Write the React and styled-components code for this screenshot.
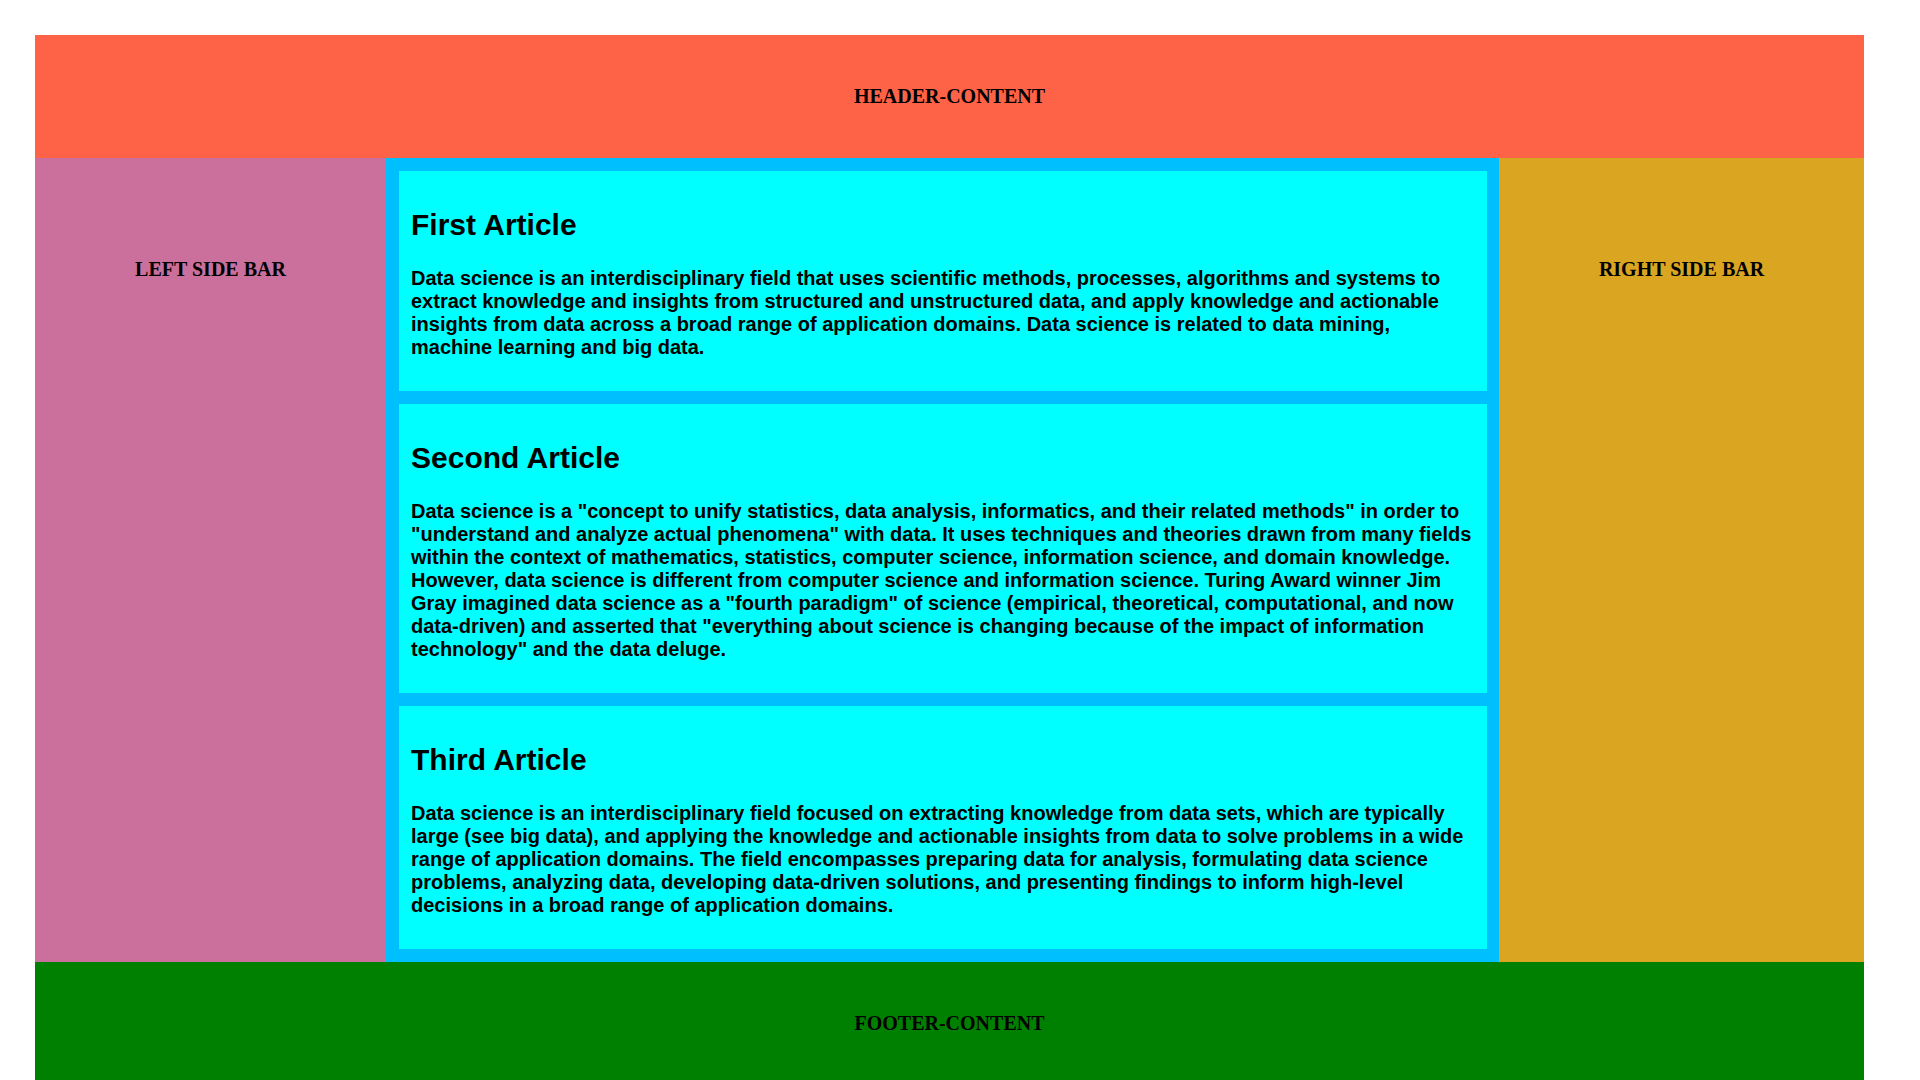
import React from "react";
import styled, { createGlobalStyle } from "styled-components";

const GlobalStyle = createGlobalStyle`
  html, body {
    margin: 0;
    padding: 0;
    background: #ffffff;
  }
  body {
    font-family: "Liberation Serif", "Times New Roman", serif;
    color: #000;
  }

  /* scrollbar like the one in the shot */
  ::-webkit-scrollbar {
    width: 21px;
    background: #f1f1f1;
  }
  ::-webkit-scrollbar-track {
    background: #f1f1f1;
  }
  ::-webkit-scrollbar-thumb {
    background: #c1c1c1;
    border: 2px solid #f1f1f1;
    background-clip: padding-box;
  }
  ::-webkit-scrollbar-button:single-button {
    display: block;
    height: 21px;
    background-color: #f1f1f1;
    background-repeat: no-repeat;
    background-size: 5px 5px, 5px 5px;
  }
  ::-webkit-scrollbar-button:single-button:vertical:decrement {
    background-image:
      linear-gradient(to top left, #a3a3a3 50%, transparent 50%),
      linear-gradient(to top right, #a3a3a3 50%, transparent 50%);
    background-position: 5.5px 8px, 10.5px 8px;
  }
  ::-webkit-scrollbar-button:single-button:vertical:increment {
    background-image:
      linear-gradient(to bottom left, #505050 50%, transparent 50%),
      linear-gradient(to bottom right, #505050 50%, transparent 50%);
    background-position: 5.5px 8px, 10.5px 8px;
  }
`;

const Page = styled.div`
  width: 1829px;
  margin: 35px;
`;

const Band = styled.header`
  height: 123px;
  background: ${(p) => p.bg};
  display: flex;
  align-items: center;
  justify-content: center;
`;

const BandTitle = styled.h3`
  margin: 0;
  font-family: "Liberation Serif", "Times New Roman", serif;
  font-size: 20px;
  font-weight: bold;
  line-height: 23px;
`;

const Middle = styled.div`
  display: grid;
  grid-template-columns: 351px 1fr 365px;
`;

const SideBar = styled.aside`
  background: ${(p) => p.bg};
  padding-top: 100px;
  text-align: center;
`;

const Main = styled.main`
  background: #00bfff;
  padding: 12.5px;
  display: flex;
  flex-direction: column;
  gap: 12.5px;
`;

const Article = styled.article`
  background: #00ffff;
  padding: 12.5px;
  font-family: "Liberation Sans", Arial, sans-serif;
  font-weight: bold;

  h2 {
    font-size: 30px;
    margin: 24.5px 0;
    line-height: 34.5px;
  }

  p {
    font-size: 20px;
    line-height: 23px;
    margin: 20px 0;
  }
`;

const articles = [
  {
    title: "First Article",
    text: "Data science is an interdisciplinary field that uses scientific methods, processes, algorithms and systems to extract knowledge and insights from structured and unstructured data, and apply knowledge and actionable insights from data across a broad range of application domains. Data science is related to data mining, machine learning and big data.",
  },
  {
    title: "Second Article",
    text: 'Data science is a "concept to unify statistics, data analysis, informatics, and their related methods" in order to "understand and analyze actual phenomena" with data. It uses techniques and theories drawn from many fields within the context of mathematics, statistics, computer science, information science, and domain knowledge. However, data science is different from computer science and information science. Turing Award winner Jim Gray imagined data science as a "fourth paradigm" of science (empirical, theoretical, computational, and now data-driven) and asserted that "everything about science is changing because of the impact of information technology" and the data deluge.',
  },
  {
    title: "Third Article",
    text: "Data science is an interdisciplinary field focused on extracting knowledge from data sets, which are typically large (see big data), and applying the knowledge and actionable insights from data to solve problems in a wide range of application domains. The field encompasses preparing data for analysis, formulating data science problems, analyzing data, developing data-driven solutions, and presenting findings to inform high-level decisions in a broad range of application domains.",
  },
];

const App = () => {
  return (
    <>
      <GlobalStyle />
      <Page>
        <Band bg="#ff6347">
          <BandTitle>HEADER-CONTENT</BandTitle>
        </Band>
        <Middle>
          <SideBar bg="#cb709d">
            <BandTitle>LEFT SIDE BAR</BandTitle>
          </SideBar>
          <Main>
            {articles.map((item) => (
              <Article key={item.title}>
                <h2>{item.title}</h2>
                <p>{item.text}</p>
              </Article>
            ))}
          </Main>
          <SideBar bg="#daa520">
            <BandTitle>RIGHT SIDE BAR</BandTitle>
          </SideBar>
        </Middle>
        <Band as="footer" bg="#008000">
          <BandTitle>FOOTER-CONTENT</BandTitle>
        </Band>
      </Page>
    </>
  );
};

export default App;
